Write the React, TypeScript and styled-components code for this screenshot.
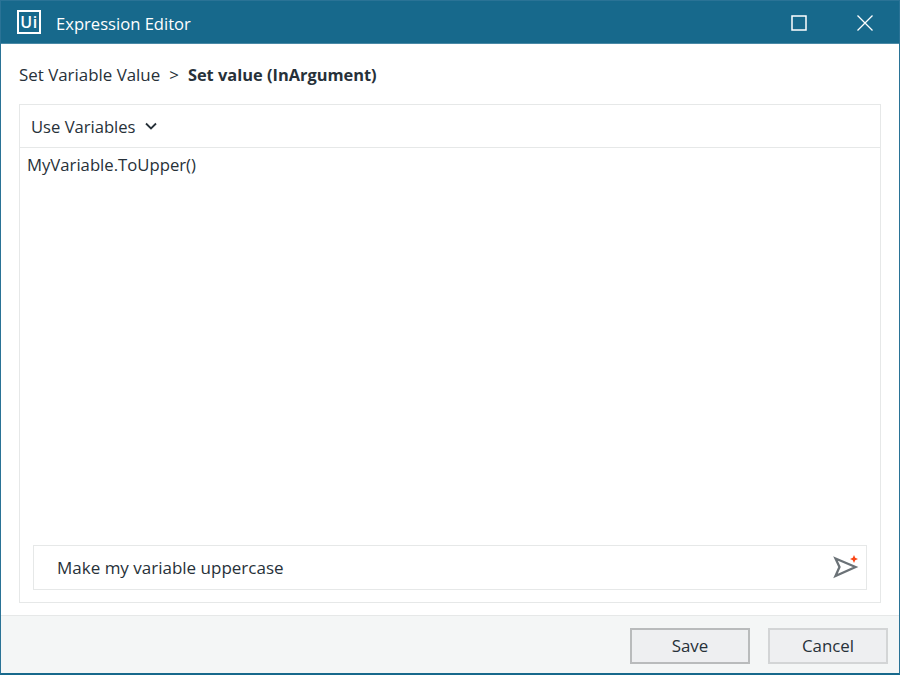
import React from 'react'
import styled, { createGlobalStyle } from 'styled-components'

const GlobalStyle = createGlobalStyle`
  html, body {
    margin: 0;
    padding: 0;
    background: #ffffff;
  }
`

const Window = styled.div`
  box-sizing: border-box;
  width: 900px;
  height: 675px;
  display: flex;
  flex-direction: column;
  border: 1px solid #2a7396;
  border-bottom-width: 2px;
  border-bottom-color: #17698c;
  font-family: 'Open Sans', 'Noto Sans', sans-serif;
  color: #273139;
  background: #ffffff;
`

const TitleBar = styled.header`
  flex: none;
  height: 42px;
  display: flex;
  align-items: center;
  padding-left: 16px;
  background: #17698c;
  border-bottom: 1px solid #4a89a6;
  color: #ffffff;
`

const Logo = styled.div`
  box-sizing: border-box;
  width: 24px;
  height: 24px;
  display: flex;
  align-items: center;
  justify-content: center;
  border: 2.5px solid #ffffff;
  font-family: 'Open Sans', sans-serif;
  font-size: 16px;
  font-weight: 600;
  letter-spacing: 0.5px;
`

const Title = styled.div`
  margin-left: 15px;
  padding-top: 3px;
  font-size: 16.6px;
  flex: 1;
`

const WindowButton = styled.button<{ $gap: number }>`
  width: 24px;
  height: 24px;
  padding: 2px 0 0;
  border: 0;
  display: flex;
  align-items: center;
  justify-content: center;
  background: transparent;
  margin-right: ${({ $gap }) => $gap}px;
`

const Content = styled.main`
  flex: 1;
  min-height: 0;
  display: flex;
  flex-direction: column;
  padding: 19px 18px 12px;
`

const Breadcrumb = styled.div`
  display: flex;
  align-items: center;
  height: 22px;
  font-size: 16.9px;
  gap: 9px;
  margin-bottom: 19px;
`

const Current = styled.span`
  font-weight: 700;
  font-size: 16.4px;
`

const Panel = styled.section`
  flex: 1;
  display: flex;
  flex-direction: column;
  border: 1px solid #e6e8e8;
  padding-bottom: 12px;
`

const Toolbar = styled.div`
  flex: none;
  height: 43px;
  box-sizing: border-box;
  display: flex;
  align-items: center;
  gap: 9px;
  padding-left: 11px;
  border-bottom: 1px solid #e6e8e8;
  font-size: 16.6px;
`

const Code = styled.div`
  flex: 1;
  padding: 6px 7px;
  font-size: 16.7px;
  line-height: 22px;
`

const Prompt = styled.div`
  flex: none;
  box-sizing: border-box;
  height: 45px;
  margin: 0 13px;
  display: flex;
  align-items: center;
  justify-content: space-between;
  padding: 0 7px 0 23px;
  border: 1px solid #e6e8e8;
  font-size: 17px;
`

const Footer = styled.footer`
  flex: none;
  height: 58px;
  box-sizing: border-box;
  display: flex;
  align-items: center;
  justify-content: flex-end;
  gap: 18px;
  padding: 2px 11px 0 0;
  background: #f4f6f6;
  border-top: 1px solid #e6e8e8;
`

const FooterButton = styled.button<{ $primary?: boolean }>`
  box-sizing: border-box;
  width: 120px;
  height: 36px;
  padding: 0;
  font-family: inherit;
  font-size: 16.9px;
  color: #273139;
  background: #eeeff1;
  border: 2px solid ${({ $primary }) => ($primary ? '#b9bbbc' : '#d3d5d6')};
`

const App: React.FC = () => (
  <>
    <GlobalStyle />
    <Window>
      <TitleBar>
        <Logo>Ui</Logo>
        <Title>Expression Editor</Title>
        <WindowButton $gap={42} aria-label="Maximize">
          <svg width="16" height="16" viewBox="0 0 16 16" fill="none">
            <rect x="1" y="1" width="14" height="14" stroke="#ffffff" strokeWidth="1.5" />
          </svg>
        </WindowButton>
        <WindowButton $gap={22} aria-label="Close">
          <svg width="18" height="18" viewBox="0 0 18 18" fill="none">
            <path d="M1.5 1.5 L16.5 16.5 M16.5 1.5 L1.5 16.5" stroke="#ffffff" strokeWidth="1.3" />
          </svg>
        </WindowButton>
      </TitleBar>
      <Content>
        <Breadcrumb>
          <span>Set Variable Value</span>
          <span>&gt;</span>
          <Current>Set value (InArgument)</Current>
        </Breadcrumb>
        <Panel>
          <Toolbar>
            Use Variables
            <svg width="12" height="8" viewBox="0 0 12 8" fill="none">
              <path d="M1 1.5 L6 6.5 L11 1.5" stroke="#273139" strokeWidth="1.8" />
            </svg>
          </Toolbar>
          <Code>MyVariable.ToUpper()</Code>
          <Prompt>
            Make my variable uppercase
            <svg width="26" height="26" viewBox="0 0 26 26" fill="none">
              <path d="M2.5 3.5 L22.5 12 L2.5 21 L6.5 12 Z" stroke="#6b7277" strokeWidth="2.3" strokeLinejoin="miter" />
              <path d="M21 0 L22.2 2.8 L25 4 L22.2 5.2 L21 8 L19.8 5.2 L17 4 L19.8 2.8 Z" fill="#fa4616" />
            </svg>
          </Prompt>
        </Panel>
      </Content>
      <Footer>
        <FooterButton $primary>Save</FooterButton>
        <FooterButton>Cancel</FooterButton>
      </Footer>
    </Window>
  </>
)

export default App
